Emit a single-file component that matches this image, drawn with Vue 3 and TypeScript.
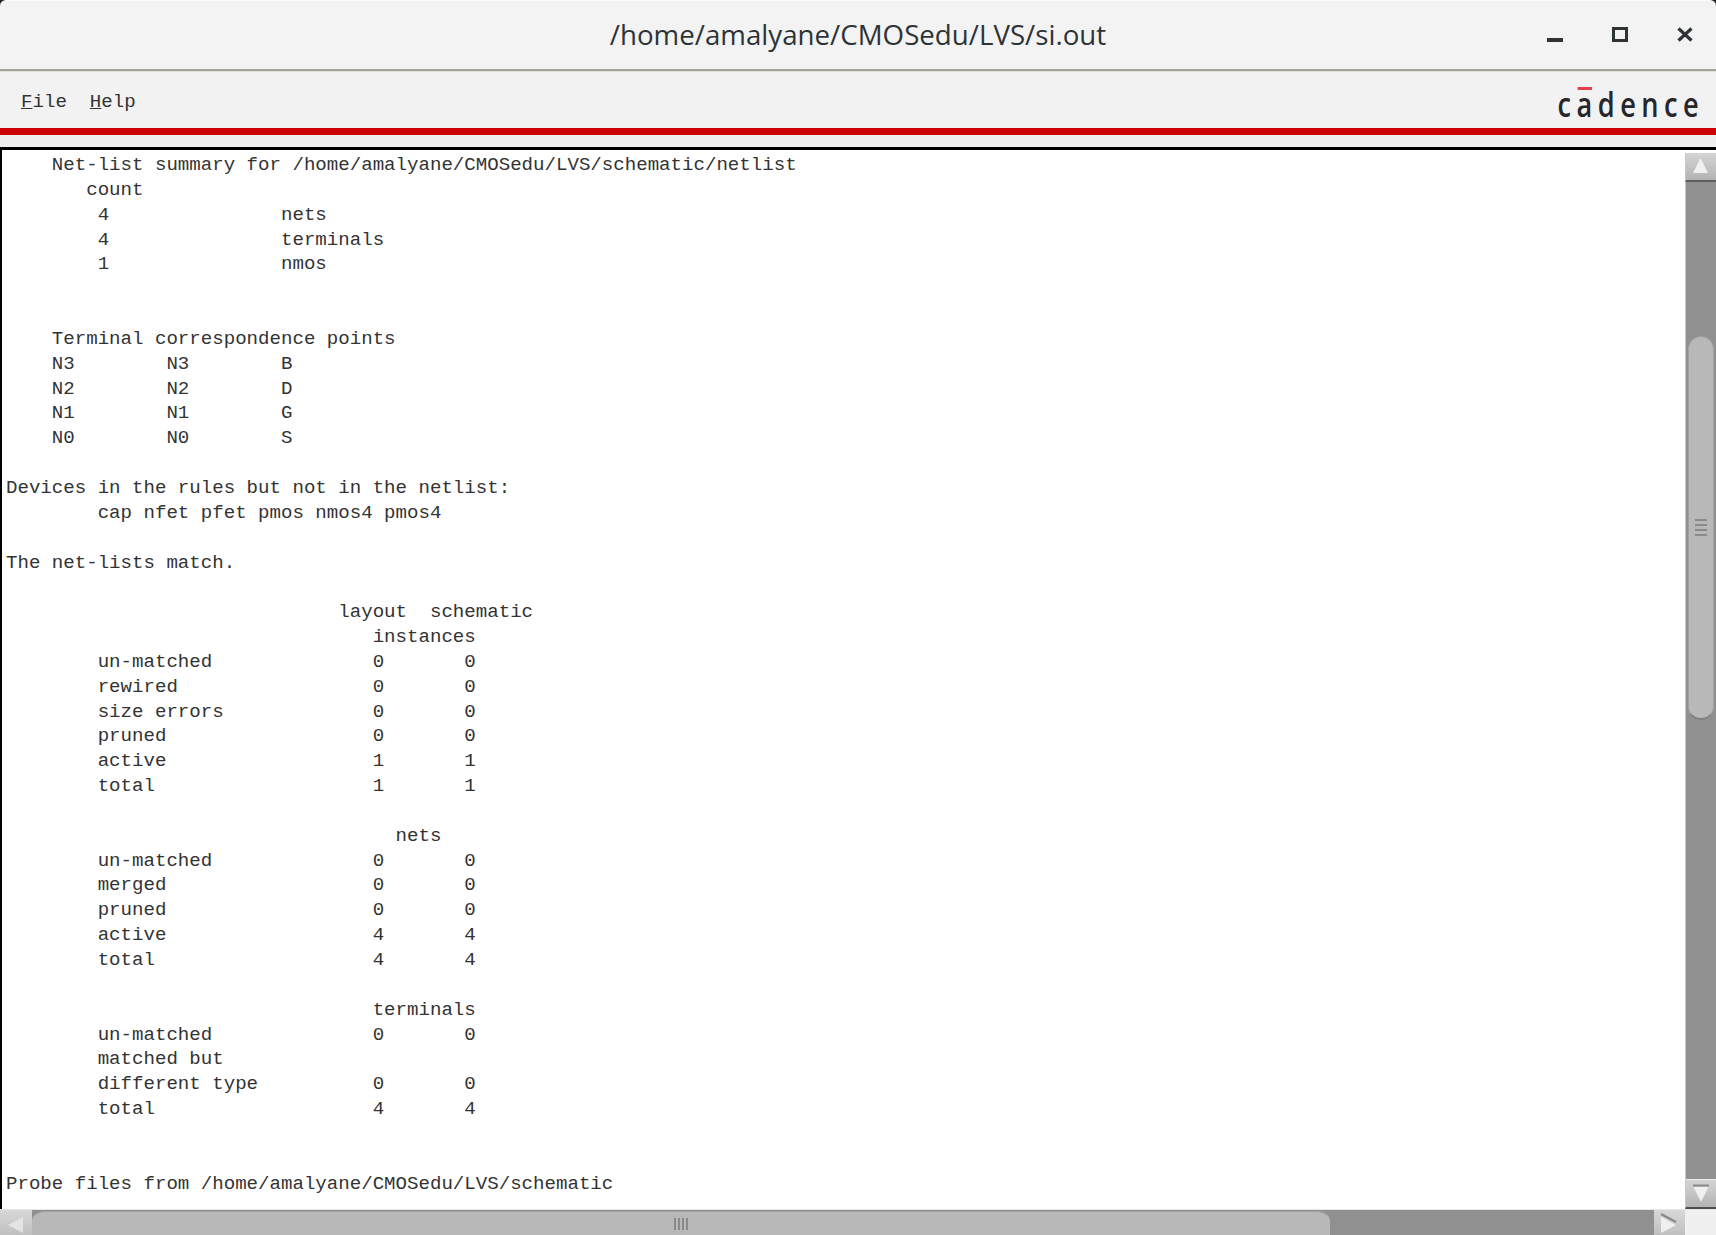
<script setup lang="ts">
const output: string = `    Net-list summary for /home/amalyane/CMOSedu/LVS/schematic/netlist
       count
        4               nets
        4               terminals
        1               nmos


    Terminal correspondence points
    N3        N3        B
    N2        N2        D
    N1        N1        G
    N0        N0        S

Devices in the rules but not in the netlist:
        cap nfet pfet pmos nmos4 pmos4

The net-lists match.

                             layout  schematic
                                instances
        un-matched              0       0
        rewired                 0       0
        size errors             0       0
        pruned                  0       0
        active                  1       1
        total                   1       1

                                  nets
        un-matched              0       0
        merged                  0       0
        pruned                  0       0
        active                  4       4
        total                   4       4

                                terminals
        un-matched              0       0
        matched but
        different type          0       0
        total                   4       4


Probe files from /home/amalyane/CMOSedu/LVS/schematic`
const gripLines: number[] = [1, 2, 3, 4]
</script>

<template>
  <div class="window">
    <header class="titlebar">
      <h1 class="title">/home/amalyane/CMOSedu/LVS/si.out</h1>
      <div class="controls">
        <svg width="16" height="16" viewBox="0 0 16 16"><rect x="0" y="11" width="16" height="4" fill="#2e3436" /></svg>
        <svg width="16" height="16" viewBox="0 0 16 16"><rect x="1.5" y="1.5" width="13" height="12" fill="none" stroke="#2e3436" stroke-width="3" /></svg>
        <svg width="16" height="16" viewBox="0 0 16 16"><path d="M1.5 1.5l13 12M14.5 1.500l-13 12" stroke="#2e3436" stroke-width="3.2" fill="none" /></svg>
      </div>
    </header>
    <nav class="menubar">
      <div class="menus">
        <span><u>F</u>ile</span>
        <span><u>H</u>elp</span>
      </div>
      <div class="logo">c<span class="logo-a">a</span>dence</div>
    </nav>
    <div class="redline"></div>
    <div class="strip"></div>
    <main class="body">
      <div class="view">
        <pre class="text">{{ output }}</pre>
      </div>
      <aside class="vbar">
        <div class="btn btn-up">
          <svg width="30" height="27" viewBox="0 0 30 27"><path d="M14.5 5l7.500 15H7z" fill="#f0f0f0" /></svg>
        </div>
        <div class="vtrough">
          <div class="vthumb">
            <i v-for="n in gripLines" :key="n" class="vgrip"></i>
          </div>
        </div>
        <div class="btn btn-down">
          <svg width="30" height="28" viewBox="0 0 30 28"><path d="M7 5.500h16" stroke="#8a8a8a" stroke-width="2" /><path d="M15 22L7.500 7h15z" fill="#f0f0f0" /></svg>
        </div>
      </aside>
    </main>
    <footer class="hbar">
      <div class="btn btn-left">
        <svg width="32" height="26" viewBox="0 0 32 26"><path d="M8 15l15-8v16z" fill="#e4e4e4" /></svg>
      </div>
      <div class="htrough">
        <div class="hthumb">
          <i v-for="n in gripLines" :key="n" class="hgrip"></i>
        </div>
      </div>
      <div class="btn btn-right">
        <svg width="31" height="26" viewBox="0 0 31 26"><path d="M7 4l15 8" stroke="#8a8a8a" stroke-width="2" /><path d="M22 15L7 7v16z" fill="#f0f0f0" /></svg>
      </div>
      <div class="corner"></div>
    </footer>
  </div>
</template>

<style>
html, body { margin: 0; background: #f2f2f2; overflow: hidden; }
</style>

<style scoped>
.window {
  width: 1716px;
  height: 1235px;
  display: flex;
  flex-direction: column;
  overflow: hidden;
  background: #222;
}
.titlebar {
  height: 71px;
  flex: none;
  box-sizing: border-box;
  display: flex;
  align-items: center;
  justify-content: center;
  position: relative;
  padding-bottom: 3px;
  background: #f3f3f3;
  border-top: 1px solid #fbfbfb;
  border-bottom: 2px solid #a3a39b;
  border-radius: 6px 6px 0 0;
}
.title {
  margin: 0;
  font: 500 27.7px "Open Sans", sans-serif;
  color: #2e3436;
}
.controls {
  position: absolute;
  right: 23px;
  top: 26px;
  display: flex;
  gap: 49px;
}
.menubar {
  height: 57px;
  flex: none;
  box-sizing: border-box;
  display: flex;
  justify-content: space-between;
  align-items: center;
  padding: 4px 18px 0 21px;
  background: #f2f2f2;
  border-top: 1px solid #e2e2e2;
}
.menus {
  display: flex;
  gap: 23px;
  font: 19.1px "Liberation Mono", monospace;
  color: #333;
  white-space: pre;
}
.logo {
  font: 600 34px "Open Sans", sans-serif;
  letter-spacing: 6.8px;
  color: #26262b;
  margin: 4px -6px 0 0;
  transform: scaleX(0.8);
  transform-origin: right center;
  line-height: 1;
}
.logo-a {
  position: relative;
}
.logo-a::before {
  content: "";
  position: absolute;
  left: 1px;
  right: 7px;
  top: 6px;
  height: 3px;
  background: #e8404a;
}
.redline {
  height: 7px;
  flex: none;
  background: #cc0000;
}
.strip {
  height: 12px;
  flex: none;
  background: #f0f0f0;
  border-bottom: 3px solid #000;
}
.body {
  flex: 1;
  min-height: 0;
  display: flex;
  background: #fff;
}
.view {
  flex: 1;
  min-width: 0;
  overflow: hidden;
  border-left: 2px solid #000;
  padding: 3px 0 0 4px;
}
.text {
  margin: 0;
  font: 19.1px/24.85px "Liberation Mono", monospace;
  color: #333;
}
.vbar {
  width: 31px;
  flex: none;
  display: flex;
  flex-direction: column;
  background: linear-gradient(#fff 3px, #909090 3px);
  padding-top: 3px;
  box-sizing: border-box;
}
.btn {
  flex: none;
  display: flex;
  align-items: center;
  justify-content: center;
  box-sizing: border-box;
  background: linear-gradient(#d4d4d4, #b4b4b4);
}
.btn-up {
  height: 29px;
  border-left: 1px solid #c8c8c8;
  border-bottom: 2px solid #5e5e5e;
}
.btn-down {
  height: 30px;
  border-left: 1px solid #c8c8c8;
  border-top: 1px solid #ececec;
  border-bottom: 2px solid #4e4e4e;
}
.vtrough {
  flex: 1;
  min-height: 0;
  padding: 154px 2px 0 2px;
  border-left: 1px solid #c8c8c8;
}
.vthumb {
  height: 384px;
  box-sizing: border-box;
  background: #b8b8b8;
  border-radius: 13px;
  border: 1px solid #a0a0a0;
  border-bottom: 2px solid #808080;
  display: flex;
  flex-direction: column;
  align-items: center;
  justify-content: center;
  gap: 3px;
}
.vgrip {
  width: 12px;
  height: 2px;
  background: #8a8a8a;
}
.hbar {
  height: 26px;
  flex: none;
  display: flex;
  background: #909090;
  border-top: 1px solid #e6e6e6;
  box-sizing: border-box;
}
.btn-left {
  width: 32px;
  background: linear-gradient(#d8d8d8, #c0c0c0);
}
.htrough {
  flex: 1;
  min-width: 0;
  padding: 1px 0 0 0;
}
.hthumb {
  width: 1298px;
  height: 24px;
  background: #b8b8b8;
  border-top: 1px solid #a0a0a0;
  box-sizing: border-box;
  border-radius: 13px 13px 13px 13px / 10px 10px 0 0;
  display: flex;
  align-items: center;
  justify-content: center;
  gap: 2px;
}
.hgrip {
  width: 2px;
  height: 12px;
  background: #8a8a8a;
}
.btn-right {
  width: 31px;
  background: linear-gradient(#d8d8d8, #c0c0c0);
}
.corner {
  width: 31px;
  flex: none;
  background: #f0f0f0;
}
</style>
